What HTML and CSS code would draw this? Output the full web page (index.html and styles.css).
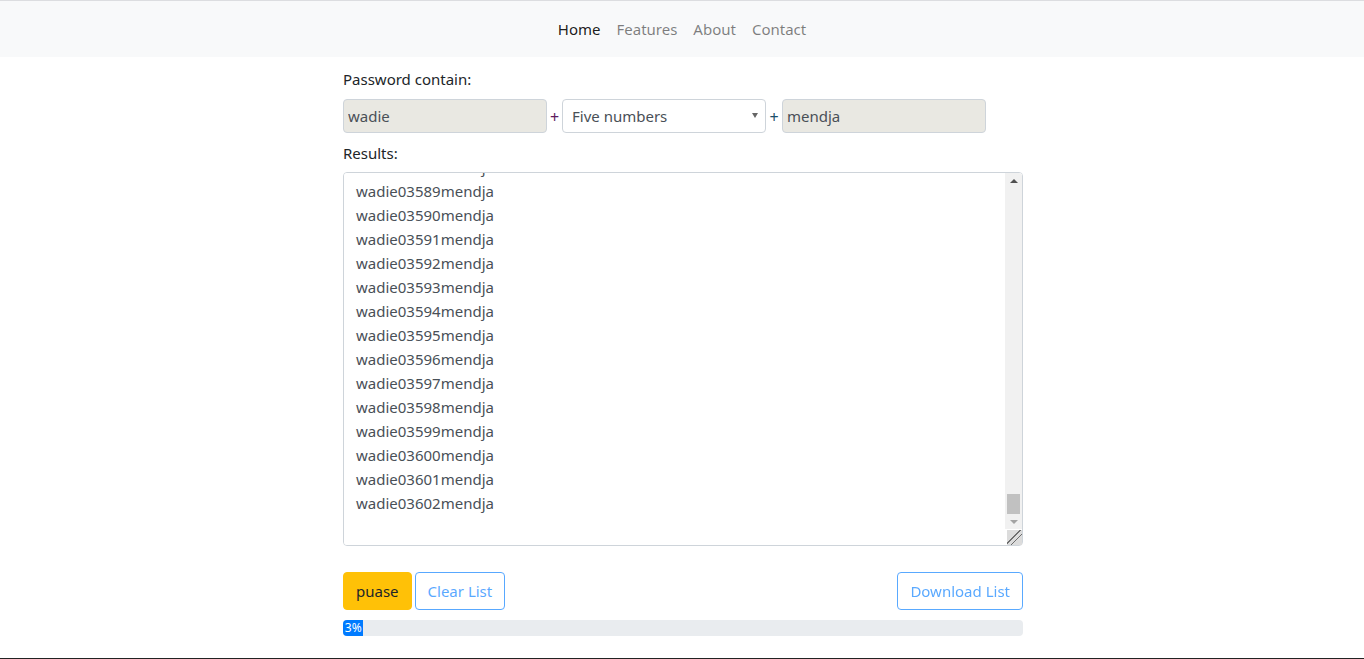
FILE: index.html
```html
<!DOCTYPE html>
<html lang="en">
<head>
<meta charset="utf-8">
<title>Password generator</title>
<link rel="stylesheet" href="styles.css">
</head>
<body>
<nav class="navbar">
  <a class="nav-link active" href="#">Home</a>
  <a class="nav-link" href="#">Features</a>
  <a class="nav-link" href="#">About</a>
  <a class="nav-link" href="#">Contact</a>
</nav>
<main class="container">
  <label class="label first">Password contain:</label>
  <div class="fields">
    <input class="field readonly" type="text" value="wadie" readonly>
    <span class="plus plus-a">+</span>
    <div class="select-wrap">
      <select class="field select">
        <option>Five numbers</option>
      </select>
    </div>
    <span class="plus plus-b">+</span>
    <input class="field readonly" type="text" value="mendja" readonly>
  </div>
  <label class="label second">Results:</label>
  <div class="results-box">
    <textarea class="results" id="results" readonly></textarea>
    <div class="fake-scrollbar" aria-hidden="true">
      <div class="sb-btn sb-up"><span class="arrow-up"></span></div>
      <div class="sb-track"><div class="sb-thumb"></div></div>
      <div class="sb-btn sb-down"><span class="arrow-down"></span></div>
    </div>
  </div>
  <div class="actions">
    <div class="left-actions">
      <button class="btn btn-warning">puase</button>
      <button class="btn btn-outline" disabled>Clear List</button>
    </div>
    <button class="btn btn-outline" disabled>Download List</button>
  </div>
  <div class="progress">
    <div class="progress-bar" style="width: 3%">3%</div>
  </div>
</main>
<div class="bottom-edge"></div>
<script src="script.js"></script>
</body>
</html>
```
FILE: styles.css
```css
html, body {
  margin: 0;
  padding: 0;
  background: #fff;
}
body {
  font-family: "Noto Sans", "Open Sans", sans-serif;
  font-size: 15px;
  line-height: 24px;
  color: #212529;
  border-top: 1px solid #dcdde0;
}
.navbar {
  background: #f8f9fa;
  height: 56px;
  display: flex;
  justify-content: center;
  align-items: center;
}
.nav-link {
  text-decoration: none;
  color: rgba(0, 0, 0, 0.5);
  padding: 0 8px;
}
.nav-link.active {
  color: rgba(0, 0, 0, 0.9);
}
.container {
  width: 680px;
  margin: 0 auto;
  padding-left: 2px;
  display: flex;
  flex-direction: column;
}
.label {
  display: block;
}
.label.first {
  margin-top: 10px;
  margin-bottom: 8px;
}
.label.second {
  margin-top: 8px;
  margin-bottom: 7px;
}
.fields {
  display: flex;
  align-items: center;
}
.field {
  box-sizing: border-box;
  width: 204px;
  height: 34px;
  border: 1px solid #ced4da;
  border-radius: 4px;
  font-family: inherit;
  font-size: 15px;
  color: #495057;
  padding: 0 4px;
  margin: 0;
  outline: none;
}
.readonly {
  background: #e9e8e2;
}
.plus {
  width: 15px;
  text-align: center;
  font-size: 16px;
  line-height: 24px;
  padding-top: 2px;
}
.plus-a { color: #5e1c5e; }
.plus-b { color: #1b4f6a; width: 16px; }
.select-wrap {
  position: relative;
}
.select-wrap::after {
  content: "";
  position: absolute;
  right: 8px;
  top: 14px;
  border-left: 3px solid transparent;
  border-right: 3px solid transparent;
  border-top: 5px solid #666;
  pointer-events: none;
}
.select {
  -webkit-appearance: none;
  appearance: none;
  background: #fff;
  padding-left: 9px;
}
.results-box {
  position: relative;
  width: 680px;
  height: 374px;
}
.results {
  display: block;
  box-sizing: border-box;
  width: 680px;
  height: 374px;
  border: 1px solid #ced4da;
  border-radius: 4px;
  padding: 6px 12px;
  font-family: inherit;
  font-size: 15px;
  line-height: 24px;
  color: #495057;
  resize: both;
  outline: none;
  margin: 0;
  scrollbar-width: none;
}
.results::-webkit-resizer {
  background-color: #dcdcdc;
  background-image:
    linear-gradient(135deg, transparent 9px, #6e6e6e 9px, #6e6e6e 10px, transparent 10px, transparent 13px, #6e6e6e 13px, #6e6e6e 14px, transparent 14px);
}
.fake-scrollbar {
  position: absolute;
  top: 1px;
  right: 1px;
  width: 17px;
  height: 356px;
  background: #f1f1f1;
  display: flex;
  flex-direction: column;
  border-top-right-radius: 3px;
}
.sb-btn {
  height: 15px;
  display: flex;
  align-items: center;
  justify-content: center;
  flex: none;
}
.arrow-up {
  width: 0;
  height: 0;
  border-left: 4px solid transparent;
  border-right: 4px solid transparent;
  border-bottom: 4px solid #505050;
}
.arrow-down {
  width: 0;
  height: 0;
  border-left: 4px solid transparent;
  border-right: 4px solid transparent;
  border-top: 4px solid #a3a3a3;
}
.sb-track {
  flex: 1;
  display: flex;
  flex-direction: column;
  justify-content: flex-end;
  align-items: center;
}
.sb-thumb {
  width: 13px;
  height: 20px;
  background: #c1c1c1;
}
.actions {
  display: flex;
  justify-content: space-between;
  margin-top: 26px;
}
.left-actions {
  display: flex;
  gap: 3px;
}
.btn {
  font-family: inherit;
  font-size: 15px;
  line-height: 24px;
  padding: 6px 12px;
  border-radius: 4px;
  border: 1px solid transparent;
  height: 38px;
  box-sizing: border-box;
  cursor: pointer;
}
.btn-warning {
  background: #ffc107;
  border-color: #ffc107;
  color: #212529;
}
.btn-outline {
  background: transparent;
  color: #007bff;
  border-color: #007bff;
  opacity: 0.65;
}
.progress {
  margin-top: 10px;
  height: 16px;
  background: #e9ecef;
  border-radius: 4px;
  overflow: hidden;
  display: flex;
}
.progress-bar {
  background: #007bff;
  color: #fff;
  font-size: 12px;
  line-height: 16px;
  text-align: center;
  white-space: nowrap;
}
.bottom-edge {
  position: fixed;
  left: 0;
  right: 0;
  bottom: 0;
  height: 1px;
  background: #222;
}
```
FILE: script.js
```js
(function () {
  var ta = document.getElementById('results');
  var lines = [];
  for (var i = 0; i <= 3602; i++) {
    var n = String(i);
    while (n.length < 5) n = '0' + n;
    lines.push('wadie' + n + 'mendja');
  }
  ta.value = lines.join('\n') + '\n';
  ta.scrollTop = ta.scrollHeight;
})();
```
